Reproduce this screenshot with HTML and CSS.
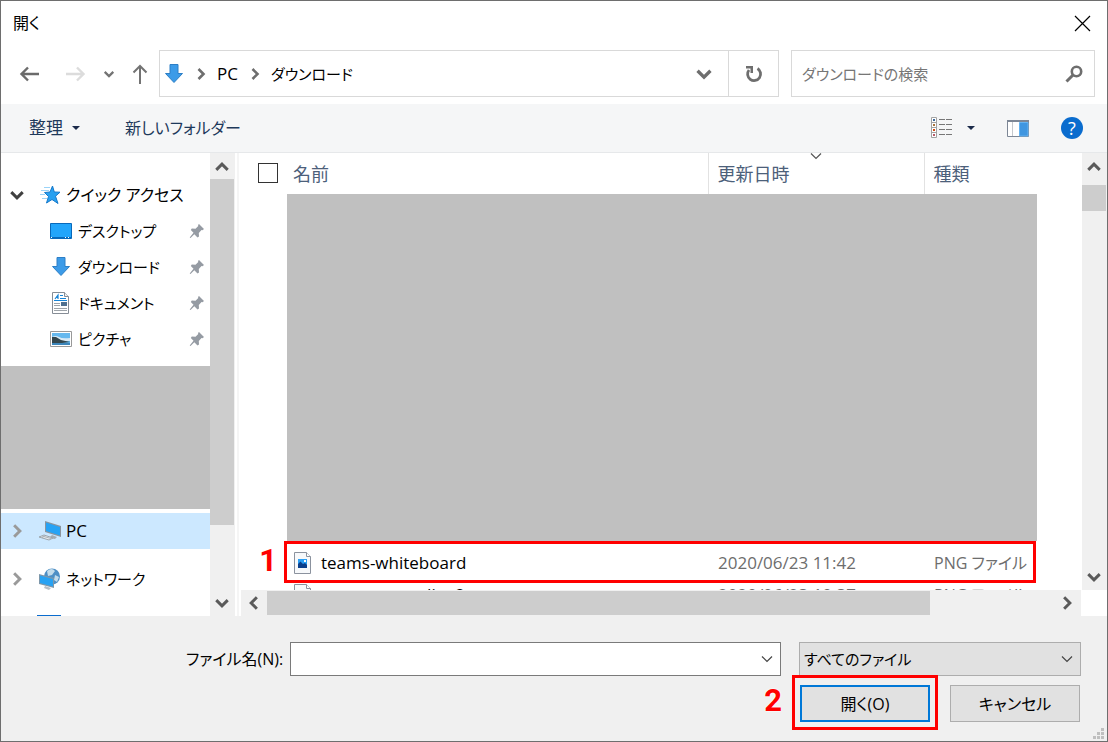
FILE: index.html
```html
<!DOCTYPE html>
<html lang="ja">
<head>
    <meta charset="UTF-8">
    <title>開く</title>
    <link rel="stylesheet" href="styles.css">
</head>
<body>
    <!-- Shared icons -->
    <svg class="sprite" aria-hidden="true">
        <symbol id="chevron" viewBox="0 0 14 14"><path d="M2 4.500l5 5 5-5" fill="none" stroke="currentColor" stroke-width="2.600"/></symbol>
        <symbol id="chevron-thin" viewBox="0 0 14 14"><path d="M2 4.500l5 5 5-5" fill="none" stroke="currentColor" stroke-width="1.200"/></symbol>
        <symbol id="download" viewBox="0 0 20 22"><path d="M6 1.500h8v9h4.500L10 19.500 1.500 10.500H6z" fill="#3c9be8" stroke="#2d7fc6"/></symbol>
        <symbol id="pin" viewBox="0 0 16 16"><path d="M10 1l5 5-1.500 1.300-1-.3-2.700 3 .2 3.500-1.500 1-3.200-3.200L1.500 15 .7 14.500l3.800-4.700L1.800 7l1-1.400 3.700.2L9.300 3 9 2z" fill="#959ba3"/></symbol>
        <symbol id="png" viewBox="0 0 18 23">
            <path d="M.5.500h12l4 4v17H.5z" fill="#f7f9fb" stroke="#8b929e"/>
            <path d="M12.500.500v4h4" fill="#fff" stroke="#8b929e"/>
            <path d="M4 7h9v9H4z" fill="#2ba0f5"/>
            <path d="M4 16v-4l2.500-2.500L9 12l2-1 2 2v3z" fill="#0b3f8c"/>
            <path d="M10 8h2v2h-2z" fill="#fff"/>
        </symbol>
    </svg>

    <div class="dialog">
        <header class="title-bar">
            <h1>開く</h1>
            <button type="button" class="close" aria-label="閉じる">
                <svg width="17" height="17" viewBox="0 0 17 17"><path d="M1 1l15 15M16 1L1 16" stroke="#000" stroke-width="1.200"/></svg>
            </button>
        </header>

        <div class="nav-bar">
            <button type="button" class="nav-btn back" aria-label="戻る">
                <svg width="21" height="16" viewBox="0 0 21 16"><path d="M20 8H3M9 1.500L2.500 8 9 14.500" fill="none" stroke="#6b6b6b" stroke-width="2.400"/></svg>
            </button>
            <button type="button" class="nav-btn forward" aria-label="進む">
                <svg width="21" height="16" viewBox="0 0 21 16"><path d="M1 8h17M12 1.500L18.500 8 12 14.500" fill="none" stroke="#dcdcdc" stroke-width="2.400"/></svg>
            </button>
            <button type="button" class="nav-btn recent" aria-label="最近の場所"><svg width="12" height="12"><use href="#chevron"/></svg></button>
            <button type="button" class="nav-btn up" aria-label="上へ">
                <svg width="16" height="20" viewBox="0 0 16 20"><path d="M8 20V2M1.500 8.500L8 2l6.500 6.500" fill="none" stroke="#737373" stroke-width="2"/></svg>
            </button>
            <div class="address">
                <svg width="20" height="22"><use href="#download"/></svg>
                <svg class="sep" width="14" height="14"><use href="#chevron"/></svg>
                <a href="#">PC</a>
                <svg class="sep" width="14" height="14"><use href="#chevron"/></svg>
                <a href="#" class="kana">ダウンロード</a>
                <button type="button" class="history" aria-label="履歴"><svg width="18" height="18"><use href="#chevron"/></svg></button>
                <button type="button" class="refresh" aria-label="更新">
                    <svg width="18" height="18" viewBox="0 0 18 18"><path d="M12.500 3.500A6.500 6.500 0 1 1 4 5" fill="none" stroke="#6e6e6e" stroke-width="2.800"/><path d="M1 1h7v7H5.500V3.500H1z" fill="#6e6e6e"/></svg>
                </button>
            </div>
            <div class="search">
                <input type="text" placeholder="ダウンロードの検索" aria-label="ダウンロードの検索">
                <svg width="18" height="18" viewBox="0 0 18 18"><circle cx="11.500" cy="6.500" r="4.700" fill="none" stroke="#6e6e6e" stroke-width="2.600"/><path d="M8 10l-6.500 6.500" stroke="#6e6e6e" stroke-width="3"/></svg>
            </div>
        </div>

        <div class="tool-bar">
            <button type="button">整理 <span class="caret"></span></button>
            <button type="button" class="new-folder">新しいフォルダー</button>
            <button type="button" class="view" aria-label="表示方法">
                <svg width="22" height="22" viewBox="0 0 22 22">
                    <path d="M.5.500h5v20h-5zM.5 5.500h5M.5 10.500h5M.5 15.500h5" fill="#fff" stroke="#a3a3a3"/>
                    <path d="M2 2h2v2H2z" fill="#3d6a9c"/><path d="M2 7h2v2H2z" fill="#a8743b"/><path d="M2 12h2v2H2z" fill="#d04a12"/><path d="M2 17h2v2H2z" fill="#b65b6a"/>
                    <path d="M8 2.500h6M15 2.500h6M8 7.500h6M15 7.500h6M8 12.500h6M15 12.500h6M8 17.500h6M15 17.500h6" stroke="#777"/>
                </svg>
                <span class="caret"></span>
            </button>
            <button type="button" class="preview" aria-label="プレビュー">
                <svg width="22" height="17" viewBox="0 0 22 17"><path d="M.5.500h21v16H.5z" fill="#fff" stroke="#7d8796"/><path d="M0 0h22v2H0z" fill="#7d8796"/><path d="M5.500 2v14" stroke="#c5c9ce"/><path d="M12.500 2.500h8.500v13.500h-8.500z" fill="#4096e0" stroke="#64b3f2"/></svg>
            </button>
            <button type="button" class="help" aria-label="ヘルプ">?</button>
        </div>

        <div class="content">
            <nav class="sidebar">
                <ul>
                    <li class="root">
                        <svg class="arrow open" width="16" height="16"><use href="#chevron"/></svg>
                        <svg class="icon" width="22" height="20" viewBox="0 0 22 20"><path d="M12.500 1l1.800 6 5.700.2-4.500 4 2.500 7.300-6-4L6.500 18l2-6.500-4-4 5.500-.5z" fill="#27a0f0" stroke="#1579cb"/><path d="M4 2.500h6M1 5.500h8M0 9.500h5M2 13.500h5" stroke="#9ad3f8"/></svg>
                        <a href="#">クイック アクセス</a>
                    </li>
                    <li>
                        <svg class="icon" width="22" height="16" viewBox="0 0 22 16"><path d="M.5.500h21v15H.5z" fill="#22a5fb" stroke="#0869bb"/><path d="M1 14.500h20" stroke="#0869bb"/><path d="M1 14h1v1H1zM15 14h1v1h-1zM18 14h1v1h-1z" fill="#fff"/></svg>
                        <a href="#" class="kana">デスクトップ</a>
                        <svg class="pin" width="16" height="16"><use href="#pin"/></svg>
                    </li>
                    <li>
                        <svg class="icon" width="22" height="22"><use href="#download"/></svg>
                        <a href="#" class="kana">ダウンロード</a>
                        <svg class="pin" width="16" height="16"><use href="#pin"/></svg>
                    </li>
                    <li>
                        <svg class="icon" width="22" height="22" viewBox="0 0 22 22"><path d="M2.500.500h12l4 4v17h-16z" fill="#fff" stroke="#868d96"/><path d="M14.500.500v4h4" fill="#eee" stroke="#868d96"/><path d="M5 7l3-4v4M6 5.500h2.500M10 3.500h3M10 6.500h6" fill="none" stroke="#1785d8" stroke-width="1.200"/><path d="M4 8.500h13" stroke="#1785d8"/><path d="M4 11.500h6M4 13.500h6M4 16.500h13M4 18.500h13" stroke="#9da3a9"/><path d="M11 10h6v4h-6z" fill="#50708f"/></svg>
                        <a href="#" class="kana">ドキュメント</a>
                        <svg class="pin" width="16" height="16"><use href="#pin"/></svg>
                    </li>
                    <li>
                        <svg class="icon" width="22" height="16" viewBox="0 0 22 16"><path d="M.5.500h21v15H.5z" fill="#fff" stroke="#999"/><path d="M2 2h18v12H2z" fill="#65b8ee"/><path d="M2 6q4-2 7 0t11 1v3H2z" fill="#d7e9f5"/><path d="M2 6l4 0 5 3 9 2-8 1H2z" fill="#33464d"/><path d="M2 12h18v2H2z" fill="#3c86bb"/></svg>
                        <a href="#" class="kana">ピクチャ</a>
                        <svg class="pin" width="16" height="16"><use href="#pin"/></svg>
                    </li>
                </ul>
                <div class="masked"></div>
                <ul>
                    <li class="root selected">
                        <svg class="arrow" width="16" height="16"><use href="#chevron"/></svg>
                        <svg class="icon" width="24" height="22" viewBox="0 0 24 22"><path d="M7 1l16 5v11L7 12z" fill="#8a949e"/><path d="M8 2.500l14 4.500v8.500L8 11z" fill="#27a3f5"/><path d="M14 15l5 2-2 2-6-1z" fill="#a4acb3"/><path d="M1 17l5-2 9 3-4 2z" fill="#e9edf0" stroke="#9ca5ac"/><path d="M4 16l9 2.500M7 15.500l-3 2.500" stroke="#abb3ba"/></svg>
                        <a href="#" class="latin">PC</a>
                    </li>
                    <li class="root">
                        <svg class="arrow" width="16" height="16"><use href="#chevron"/></svg>
                        <svg class="icon" width="24" height="22" viewBox="0 0 24 22"><circle cx="14" cy="8.500" r="8" fill="#4e8fc5"/><path d="M9 3q5-4 8 0l-3 4-4 1zM17 7l4 2-2 5-3-2z" fill="#c3dceb"/><path d="M1 6l15 4v10L1 16z" fill="#7d97aa"/><path d="M2 7.500l13 3.500v7.500L2 15z" fill="#28a2f3"/><path d="M7 18l6 2-2 2-5-2z" fill="#b7bec5"/></svg>
                        <a href="#" class="kana">ネットワーク</a>
                    </li>
                </ul>
                <div class="next-item"></div>
            </nav>
            <div class="scrollbar vertical side-scroll">
                <svg class="up" width="16" height="16"><use href="#chevron"/></svg>
                <div class="thumb"></div>
                <svg width="16" height="16"><use href="#chevron"/></svg>
            </div>

            <main class="files">
                <div class="list-row">
                    <div class="list">
                        <table>
                            <thead>
                                <tr>
                                    <th class="check"><input type="checkbox" aria-label="すべて選択"></th>
                                    <th class="name">名前</th>
                                    <th class="date">更新日時<svg class="sort" width="14" height="14"><use href="#chevron-thin"/></svg></th>
                                    <th class="type">種類</th>
                                </tr>
                            </thead>
                            <tbody>
                                <tr>
                                    <td></td>
                                    <td colspan="3"><div class="masked"></div></td>
                                </tr>
                                <tr class="file">
                                    <td class="step"><span class="number">1</span><span class="frame"></span></td>
                                    <td><span class="file-name"><svg width="18" height="23"><use href="#png"/></svg>teams-whiteboard</span></td>
                                    <td class="info">2020/06/23 11:42</td>
                                    <td class="info file-type">PNG ファイル</td>
                                </tr>
                                <tr class="file next">
                                    <td></td>
                                    <td><span class="file-name"><svg width="18" height="23"><use href="#png"/></svg>screen-recording2</span></td>
                                    <td class="info">2020/06/23 10:37</td>
                                    <td class="info file-type">PNG ファイル</td>
                                </tr>
                            </tbody>
                        </table>
                    </div>
                    <div class="scrollbar vertical list-scroll">
                        <svg class="up" width="16" height="16"><use href="#chevron"/></svg>
                        <div class="thumb"></div>
                        <svg width="16" height="16"><use href="#chevron"/></svg>
                    </div>
                </div>
                <div class="scrollbar horizontal">
                    <svg class="left" width="16" height="16"><use href="#chevron"/></svg>
                    <div class="thumb"></div>
                    <svg class="right" width="16" height="16"><use href="#chevron"/></svg>
                </div>
            </main>
        </div>

        <form class="bottom">
            <div class="field-row">
                <label for="fileName">ファイル名(N):</label>
                <div class="combo">
                    <input type="text" id="fileName">
                    <svg width="14" height="14"><use href="#chevron-thin"/></svg>
                </div>
                <div class="combo filter">
                    <select aria-label="ファイルの種類">
                        <option>すべてのファイル</option>
                    </select>
                    <svg width="14" height="14"><use href="#chevron-thin"/></svg>
                </div>
            </div>
            <div class="button-row">
                <div class="open-wrap">
                    <span class="number">2</span>
                    <span class="frame"></span>
                    <button type="button" class="btn primary">開く(O)</button>
                </div>
                <button type="button" class="btn">キャンセル</button>
            </div>
            <svg class="grip" width="12" height="12" viewBox="0 0 12 12"><path d="M8 0h3v3H8zM4 4h3v3H4zM8 4h3v3H8zM0 8h3v3H0zM4 8h3v3H4zM8 8h3v3H8z" fill="#bfbfbf"/></svg>
        </form>
    </div>
</body>
</html>
```
FILE: styles.css
```css
* {
    box-sizing: border-box;
}

body {
    margin: 0;
    font-family: "Open Sans", "Noto Sans CJK JP", sans-serif;
    font-size: 17px;
    line-height: 24px;
    font-feature-settings: "palt";
    color: #000;
}

button, input, select {
    font: inherit;
    font-feature-settings: inherit;
    color: inherit;
}

button {
    padding: 0;
    border: none;
    background: none;
}

a {
    color: inherit;
    text-decoration: none;
}

svg {
    display: block;
    flex: none;
}

.sprite {
    position: absolute;
    width: 0;
    height: 0;
}

.dialog {
    display: flex;
    flex-direction: column;
    height: 100vh;
    min-height: 600px;
    border: 1px solid #6e6e6e;
    background: #fff;
}

.title-bar {
    display: flex;
    justify-content: space-between;
    align-items: center;
    height: 44px;
    padding: 0 16px 0 12px;
}

.title-bar h1 {
    margin: 0;
    font-size: 16px;
    font-weight: normal;
}

/* Navigation */
.nav-bar {
    display: flex;
    align-items: center;
    height: 59px;
    padding: 0 12px 2px 18px;
}

.nav-btn.forward {
    margin-left: 25px;
}

.nav-btn.recent {
    margin-left: 17px;
    color: #737373;
}

.nav-btn.up {
    margin: 0 11px 0 17px;
}

.address {
    flex: 1;
    display: flex;
    align-items: center;
    height: 47px;
    padding-left: 4px;
    border: 1px solid #d9d9d9;
}

.address .sep {
    margin: 0 9px 0 10px;
    color: #6e6e6e;
    transform: rotate(-90deg);
}

.kana {
    font-size: 15px;
}

.history {
    margin: 0 15px 0 auto;
    color: #6e6e6e;
}

.refresh {
    display: flex;
    align-items: center;
    justify-content: center;
    width: 50px;
    height: 100%;
    border-left: 1px solid #d9d9d9;
}

.search {
    display: flex;
    align-items: center;
    width: 304px;
    height: 47px;
    margin-left: 12px;
    padding: 0 11px 0 10px;
    border: 1px solid #d9d9d9;
}

.search input {
    flex: 1;
    min-width: 0;
    padding: 0;
    border: none;
    outline: none;
    font-size: 15px;
}

.search input::placeholder {
    color: #767676;
}

/* Toolbar */
.tool-bar {
    display: flex;
    align-items: center;
    height: 49px;
    padding: 0 24px 0 28px;
    background: #f5f6f7;
    border-bottom: 1px solid #e6e8ea;
    color: #1e395b;
}

.tool-bar button {
    display: flex;
    align-items: center;
}

.caret {
    margin-left: 9px;
    border: 4px solid transparent;
    border-top-color: #1b2a4a;
    border-bottom: none;
}

.tool-bar .new-folder {
    margin-left: 45px;
    font-size: 16px;
}

.tool-bar .view {
    margin-left: auto;
}

.view .caret {
    margin-left: 14px;
}

.tool-bar .preview {
    margin: 0 32px;
}

.tool-bar .help {
    justify-content: center;
    width: 22px;
    height: 22px;
    border-radius: 50%;
    background: #0a6cce;
    color: #fff;
    font-size: 18px;
}

/* Content */
.content {
    flex: 1;
    display: flex;
    min-height: 0;
}

.sidebar {
    width: 209px;
    overflow: hidden;
}

.sidebar ul {
    margin: 0;
    padding: 0;
    list-style: none;
}

.sidebar ul:first-child {
    padding-top: 24px;
}

.sidebar li {
    display: flex;
    align-items: center;
    height: 36px;
    padding: 0 5px 0 49px;
    font-size: 16px;
}

.sidebar li a {
    margin-left: 6px;
}

.sidebar .root {
    padding-left: 8px;
}

.sidebar .root a {
    margin-left: 4px;
}

.sidebar .latin {
    font-size: 17px;
}

.sidebar .root + .root {
    margin-top: 12px;
}

.arrow {
    color: #9a9a9a;
    margin-right: 13px;
    transform: rotate(-90deg);
}

.arrow.open {
    color: #404040;
    margin-right: 15px;
    transform: none;
}

.pin {
    margin-left: auto;
}

.selected {
    background: #cce8ff;
}

.masked {
    background: #c0c0c0;
}

.sidebar .masked {
    height: 143px;
    margin: 9px 0 4px;
}

.next-item {
    width: 24px;
    height: 2px;
    margin: 18px 0 0 36px;
    background: #0a6cce;
}

/* Scrollbars */
.scrollbar {
    display: flex;
    align-items: center;
    justify-content: space-between;
    background: #f0f0f0;
    color: #5a5a5a;
}

.thumb {
    background: #cdcdcd;
}

.vertical {
    flex-direction: column;
    width: 25px;
    padding: 6px 1px 5px 0;
}

.vertical .thumb {
    width: 24px;
}

.vertical .up {
    transform: rotate(180deg);
}

.side-scroll .thumb {
    height: 346px;
    margin: 4px 0 auto;
}

.list-scroll .thumb {
    height: 26px;
    margin: 10px 0 auto;
}

.horizontal {
    height: 26px;
    margin-right: 26px;
    padding: 0 6px 0 5px;
}

.horizontal .thumb {
    width: 80%;
    height: 24px;
    margin: 0 auto 0 5px;
}

.horizontal .left {
    transform: rotate(90deg);
}

.horizontal .right {
    transform: rotate(-90deg);
}

/* File list */
.files {
    flex: 1;
    display: flex;
    flex-direction: column;
    min-width: 0;
    margin-left: 2px;
    border-left: 2px solid #f5f5f5;
    padding-left: 2px;
}

.list-row {
    flex: 1;
    display: flex;
    min-height: 0;
}

.list {
    flex: 1;
    overflow: hidden;
}

table {
    width: 100%;
    border-collapse: collapse;
    table-layout: fixed;
}

th, td {
    padding: 0;
    text-align: left;
    font-weight: normal;
}

th {
    position: relative;
    height: 41px;
    color: #4c607a;
    font-size: 18px;
}

.name {
    padding-left: 6px;
}

.check {
    width: 46px;
    padding: 0 0 2px 17px;
}

.check input {
    display: block;
    appearance: none;
    width: 20px;
    height: 20px;
    margin: 0;
    border: 1px solid #333;
}

.date {
    width: 216px;
}

.type {
    width: 158px;
}

.date, .type {
    padding-left: 9px;
    border-left: 1px solid #e2e2e2;
}

.sort {
    position: absolute;
    top: -4px;
    left: calc(50% - 7px);
    color: #555;
}

.list .masked {
    height: 347px;
    margin-right: 45px;
}

.file td {
    height: 42px;
    padding-top: 2px;
}

.file-name {
    display: flex;
    align-items: center;
    gap: 9px;
    padding-left: 7px;
}

.file .info {
    padding-left: 10px;
    color: #6d6d6d;
}

.file .file-type {
    font-size: 16px;
}

.file.next td {
    height: 24px;
    padding: 0;
}

.file.next .info {
    padding-left: 10px;
}

/* Numbered steps */
.step, .open-wrap {
    position: relative;
}

.number {
    position: absolute;
    font: bold 31px/32px Roboto, Arial, sans-serif;
    color: #f00;
    text-shadow: 0 0 2px #fff, 0 0 2px #fff;
}

.frame {
    position: absolute;
    border: 3px solid #f00;
    pointer-events: none;
}

.step .number {
    top: 4px;
    right: 10px;
}

.step .frame {
    top: 0;
    left: 43px;
    width: 752px;
    height: 42px;
}

.open-wrap .number {
    top: 0;
    right: 148px;
}

.open-wrap .frame {
    inset: -10px -8px -8px;
}

/* Bottom */
.bottom {
    position: relative;
    height: 125px;
    padding: 26px 26px 0 185px;
    background: #f0f0f0;
}

.field-row {
    display: flex;
    align-items: center;
}

.field-row label {
    width: 104px;
    font-size: 16px;
}

.combo {
    flex: 1;
    position: relative;
}

.combo input, .combo select {
    display: block;
    width: 100%;
    height: 34px;
    border: 1px solid #7a7a7a;
    border-radius: 0;
    outline: none;
    background: #fff;
}

.combo svg {
    position: absolute;
    top: 10px;
    right: 7px;
    color: #444;
}

.filter {
    flex: none;
    width: 282px;
    margin-left: 18px;
}

.combo select {
    appearance: none;
    padding: 0 4px;
    border-color: #adadad;
    background: #e1e1e1;
    font-size: 15px;
}

.button-row {
    display: flex;
    justify-content: flex-end;
    gap: 20px;
    margin: 9px 1px 0 0;
}

.btn {
    display: block;
    width: 130px;
    height: 37px;
    border: 1px solid #adadad;
    background: #e1e1e1;
    font-size: 16px;
}

.btn.primary {
    border: 2px solid #0078d7;
}

.grip {
    position: absolute;
    right: 2px;
    bottom: 1px;
}
```
